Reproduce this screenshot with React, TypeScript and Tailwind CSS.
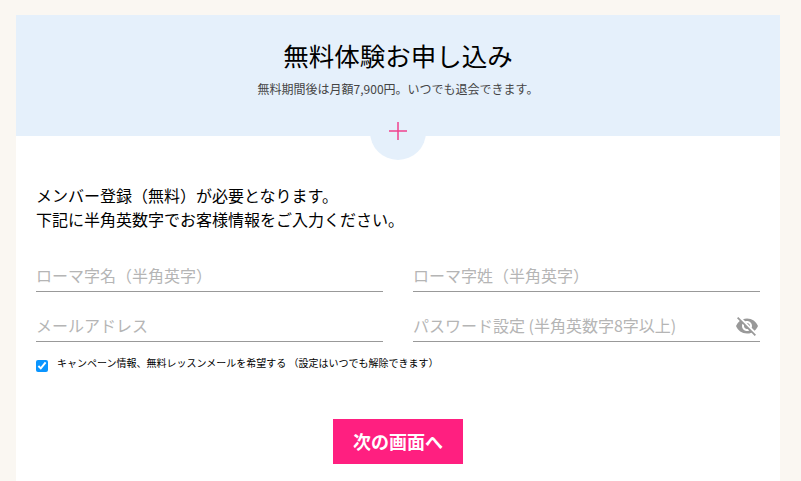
import { MdVisibilityOff } from 'react-icons/md';

const font = { fontFamily: '"Noto Sans CJK JP", sans-serif' };

function Field({ placeholder, children }: { placeholder: string; children?: React.ReactNode }) {
  return (
    <div className="flex h-[36px] items-center border-b border-[#999999] pt-[2px]">
      <input
        type="text"
        placeholder={placeholder}
        className="min-w-0 flex-1 bg-transparent text-[16px] outline-none placeholder:text-[#b5b5b5]"
      />
      {children}
    </div>
  );
}

export default function App() {
  return (
    <div className="h-[481px] overflow-hidden bg-[#faf7f2] px-4 pt-[15px] text-black" style={font}>
      <div className="h-[466px] w-[764px] bg-white">
        <div className="relative h-[121px] bg-[#e5f0fb] pt-[23px] text-center">
          <h1 className="text-[25.5px] leading-[34px]">無料体験お申し込み</h1>
          <p className="mt-[9px] text-[12px] leading-[16px] text-[#444444]">
            無料期間後は月額7,900円。いつでも退会できます。
          </p>
          <div className="absolute left-[354px] top-[89px] flex h-[56px] w-[56px] items-center justify-center rounded-full bg-[#e5f0fb] pb-[2px]">
            <svg width="18" height="18" viewBox="0 0 18 18" stroke="#f0418f" strokeWidth="1.5" fill="none">
              <path d="M0 9H18M9 0V18" />
            </svg>
          </div>
        </div>

        <div className="px-5 pt-[47px]">
          <p className="text-[16px] leading-[24px]">
            メンバー登録（無料）が必要となります。
            <br />
            下記に半角英数字でお客様情報をご入力ください。
          </p>

          <div className="mt-[25px] grid grid-cols-2 gap-x-[30px] gap-y-[14px]">
            <Field placeholder="ローマ字名（半角英字）" />
            <Field placeholder="ローマ字姓（半角英字）" />
            <Field placeholder="メールアドレス" />
            <Field placeholder="パスワード設定 (半角英数字8字以上)">
              <MdVisibilityOff className="mr-[1px] mt-[2px] text-[24px] text-[#999999]" />
            </Field>
          </div>

          <label className="mt-[14px] flex items-start">
            <input type="checkbox" defaultChecked className="mt-[4px] h-3 w-3 accent-[#0a95ff]" />
            <span className="ml-[9px] text-[10px] leading-[14px]">
              キャンペーン情報、無料レッスンメールを希望する （設定はいつでも解除できます）
            </span>
          </label>

          <div className="mt-[47px] flex justify-center">
            <button type="button" className="h-[45px] w-[130px] bg-[#ff1f80] text-[18px] font-bold text-white">
              次の画面へ
            </button>
          </div>
        </div>
      </div>
    </div>
  );
}
